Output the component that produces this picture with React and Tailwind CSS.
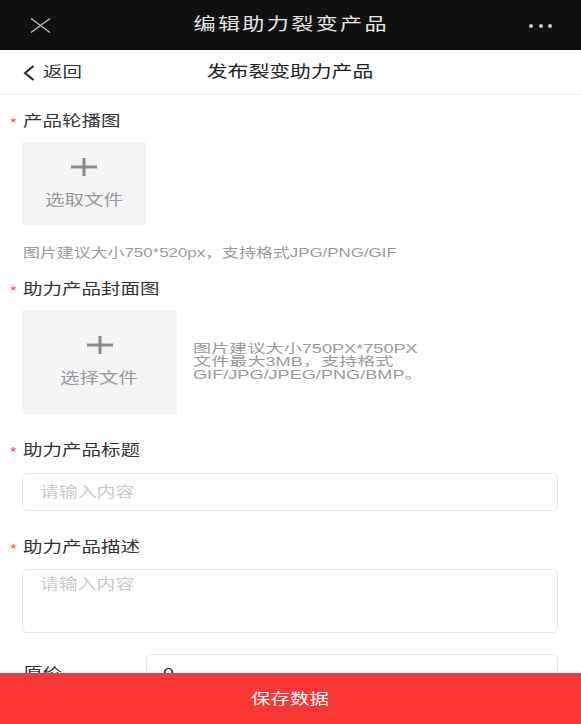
import React from "react";

const FONT = { fontFamily: '"Liberation Sans", "Noto Sans CJK SC", sans-serif' };

function T({ children, className = "" }) {
  return <span className={"inline-block origin-left scale-x-[1.3] whitespace-nowrap " + className}>{children}</span>;
}
function C({ children, className = "" }) {
  return <span className={"inline-block origin-center scale-x-[1.3] whitespace-nowrap " + className}>{children}</span>;
}
function W({ children }) {
  return <span className="block origin-left scale-x-[1.45] whitespace-nowrap">{children}</span>;
}

function Plus() {
  return (
    <svg width="26" height="18" viewBox="0 0 26 18" className="block">
      <rect x="0" y="7.5" width="26" height="3" fill="#8a8a8a" />
      <rect x="11.5" y="0" width="3" height="18" fill="#8a8a8a" />
    </svg>
  );
}

function Label({ text, className = "" }) {
  return (
    <div className={"flex h-[20px] items-center pl-[10px] " + className}>
      <span className="w-[13px] text-[13px] leading-none text-[#f04545] pt-[3px]"><T>*</T></span>
      <span className="text-[15px] leading-[20px] text-[#333]"><T>{text}</T></span>
    </div>
  );
}

export default function App() {
  return (
    <div className="relative h-[724px] w-[581px] overflow-hidden bg-white" style={FONT}>
      {/* top bar */}
      <div className="flex h-[50px] items-center justify-between bg-[#111111] pl-[30px] pr-[29px]">
        <svg width="21" height="15" viewBox="0 0 21 15" className="mt-[1px]">
          <path d="M1 0.5 L20 14.5 M20 0.5 L1 14.5" stroke="#bdbdbd" strokeWidth="1.3" fill="none" />
        </svg>
        <div className="text-[17px] leading-[20px] tracking-[1.8px] text-[#e6e6e6] ml-[2px]"><C>编辑助力裂变产品</C></div>
        <div className="flex gap-[5.5px] mt-[1px]">
          <span className="h-[4px] w-[4px] rounded-full bg-[#c8c8c8]" />
          <span className="h-[4px] w-[4px] rounded-full bg-[#c8c8c8]" />
          <span className="h-[4px] w-[4px] rounded-full bg-[#c8c8c8]" />
        </div>
      </div>

      {/* sub header */}
      <div className="relative flex h-[45px] items-center border-b border-[#f0f0f0] pl-[23px]">
        <svg width="12" height="16" viewBox="0 0 12 16" className="mt-[1px]">
          <path d="M10.5 1 L2 8 L10.5 15" stroke="#222" strokeWidth="2" fill="none" />
        </svg>
        <span className="ml-[8px] text-[15px] leading-[20px] text-[#333]"><T>返回</T></span>
        <div className="flex-1" />
        <div className="absolute left-0 right-0 top-0 flex h-[44px] items-center justify-center pointer-events-none">
          <span className="text-[16px] leading-[20px] text-[#222]"><C>发布裂变助力产品</C></span>
        </div>
      </div>

      {/* body */}
      <div className="flex flex-col">
        <Label text="产品轮播图" className="mt-[16px]" />
        <div className="ml-[22px] mt-[11px] flex h-[83px] w-[124px] flex-col items-center bg-[#f3f4f6] pt-[16px]">
          <Plus />
          <span className="mt-[14px] text-[15px] leading-[20px] text-[#999]"><C>选取文件</C></span>
        </div>
        <div className="mt-[20px] pl-[23px] text-[13px] leading-[16px] text-[#9a9a9a]"><T>图片建议大小750*520px，支持格式JPG/PNG/GIF</T></div>

        <Label text="助力产品封面图" className="mt-[18px]" />
        <div className="mt-[11px] flex items-center pl-[22px]">
          <div className="flex h-[104px] w-[155px] flex-col items-center bg-[#f3f4f6] pt-[26px]">
            <Plus />
            <span className="mt-[14px] text-[15px] leading-[20px] text-[#999]"><C>选择文件</C></span>
          </div>
          <div className="ml-[16px] flex flex-col text-[12.5px] leading-[13px] text-[#9a9a9a]">
            <W>图片建议大小750PX*750PX</W>
            <W>文件最大3MB，支持格式</W>
            <W>GIF/JPG/JPEG/PNG/BMP。</W>
          </div>
        </div>

        <Label text="助力产品标题" className="mt-[26px]" />
        <div className="ml-[22px] mt-[13px] flex h-[38px] w-[536px] items-center rounded-[5px] border border-[#e3e5ea] pl-[17px]">
          <span className="text-[14.5px] leading-[20px] text-[#c8c9cc]"><T>请输入内容</T></span>
        </div>

        <Label text="助力产品描述" className="mt-[26px]" />
        <div className="ml-[22px] mt-[12px] h-[64px] w-[536px] rounded-[5px] border border-[#e3e5ea] pl-[17px] pt-[2px]">
          <span className="text-[14.5px] leading-[20px] text-[#c8c9cc]"><T>请输入内容</T></span>
        </div>

        <div className="mt-[21px] flex items-center pl-[23px]">
          <span className="w-[123px] text-[15px] leading-[20px] text-[#333]"><T>原价</T></span>
          <div className="flex h-[38px] w-[412px] items-center rounded-[5px] border border-[#e3e5ea] pl-[16px]">
            <span className="text-[15px] leading-[20px] text-[#333]"><T>0</T></span>
          </div>
        </div>
      </div>

      {/* bottom save bar */}
      <div className="absolute bottom-0 left-0 right-0 flex h-[51px] items-center justify-center bg-[#fc3535]">
        <span className="text-[15px] leading-[20px] text-white"><C>保存数据</C></span>
      </div>
    </div>
  );
}
